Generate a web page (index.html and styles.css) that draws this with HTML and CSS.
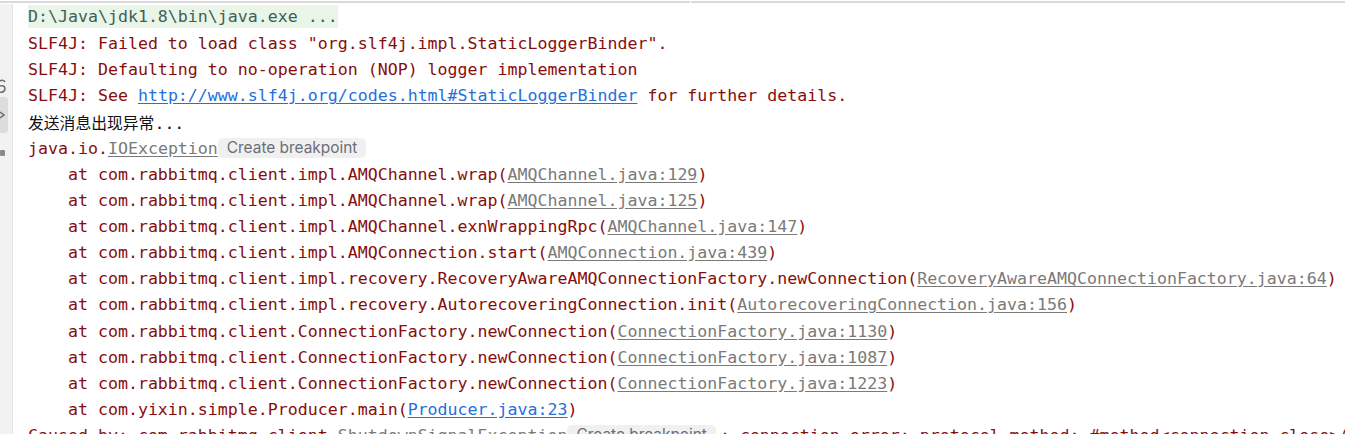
FILE: index.html
```html
<!DOCTYPE html>
<html lang="zh-CN">
<head>
<meta charset="utf-8">
<title>Console</title>
<link rel="stylesheet" href="styles.css">
</head>
<body>
<div class="topbar"><div class="seg seg-left"></div><div class="seg seg-right"></div></div>
<div class="panel">
  <aside class="gutter">
    <svg class="gicon gicon-a" width="6" height="16" viewBox="0 0 6 16"><path d="M0 3 Q3 1 5 4 M0 8 Q5 7 5 11 Q4 15 0 14" fill="none" stroke="#6e6e6e" stroke-width="1.6"/></svg>
    <div class="gbtn"><svg width="6" height="8" viewBox="0 0 6 8"><path d="M0 1 L4 4 L0 7" fill="none" stroke="#6e6e6e" stroke-width="1.5"/></svg></div>
    <svg class="gicon gicon-c" width="6" height="8" viewBox="0 0 6 8"><rect x="0" y="1" width="5" height="6" rx="1" fill="#8a8a8a"/></svg>
  </aside>
  <main class="console">
    <div class="line"><span class="cmd">D:\Java\jdk1.8\bin\java.exe ...</span></div>
    <div class="line err">SLF4J: Failed to load class "org.slf4j.impl.StaticLoggerBinder".</div>
    <div class="line err">SLF4J: Defaulting to no-operation (NOP) logger implementation</div>
    <div class="line err">SLF4J: See <a class="link" href="#">http://www.slf4j.org/codes.html#StaticLoggerBinder</a> for further details.</div>
    <div class="line out"><span class="cjk">发送消息出现异常</span>...</div>
    <div class="line err">java.io.<span class="glink">IOException</span><span class="hint">Create breakpoint</span></div>
    <div class="line err">    at com.rabbitmq.client.impl.AMQChannel.wrap(<span class="glink">AMQChannel.java:129</span>)</div>
    <div class="line err">    at com.rabbitmq.client.impl.AMQChannel.wrap(<span class="glink">AMQChannel.java:125</span>)</div>
    <div class="line err">    at com.rabbitmq.client.impl.AMQChannel.exnWrappingRpc(<span class="glink">AMQChannel.java:147</span>)</div>
    <div class="line err">    at com.rabbitmq.client.impl.AMQConnection.start(<span class="glink">AMQConnection.java:439</span>)</div>
    <div class="line err">    at com.rabbitmq.client.impl.recovery.RecoveryAwareAMQConnectionFactory.newConnection(<span class="glink">RecoveryAwareAMQConnectionFactory.java:64</span>)</div>
    <div class="line err">    at com.rabbitmq.client.impl.recovery.AutorecoveringConnection.init(<span class="glink">AutorecoveringConnection.java:156</span>)</div>
    <div class="line err">    at com.rabbitmq.client.ConnectionFactory.newConnection(<span class="glink">ConnectionFactory.java:1130</span>)</div>
    <div class="line err">    at com.rabbitmq.client.ConnectionFactory.newConnection(<span class="glink">ConnectionFactory.java:1087</span>)</div>
    <div class="line err">    at com.rabbitmq.client.ConnectionFactory.newConnection(<span class="glink">ConnectionFactory.java:1223</span>)</div>
    <div class="line err">    at com.yixin.simple.Producer.main(<a class="link" href="#">Producer.java:23</a>)</div>
    <div class="line err">Caused by: com.rabbitmq.client.<span class="glink">ShutdownSignalException</span><span class="hint">Create breakpoint</span>: connection error; protocol method: #method&lt;connection.close&gt;(reply-code=530, reply-text=NOT_ALLOWED</div>
  </main>
</div>
</body>
</html>
```

FILE: styles.css
```css
html, body {
  margin: 0;
  padding: 0;
  background: #ffffff;
  overflow: hidden;
}

body {
  width: 1345px;
  height: 434px;
}

.topbar {
  display: flex;
  gap: 1px;
  height: 3px;
  padding-top: 1px;
}

.seg {
  height: 2px;
  background: #d9d9d9;
}

.seg-left {
  width: 690px;
}

.seg-right {
  flex: 1;
}

.panel {
  display: flex;
  height: 430px;
}

.gutter {
  width: 12px;
  flex: none;
  background: #f2f2f2;
  border-right: 1px solid #e3e3e3;
  display: flex;
  flex-direction: column;
  align-items: flex-start;
}

.gicon {
  display: block;
}

.gicon-a {
  margin-top: 74px;
}

.gbtn {
  width: 8px;
  height: 36px;
  margin-top: 3px;
  background: #dcdcdc;
  border-radius: 0 4px 4px 0;
  display: flex;
  align-items: center;
}

.gicon-c {
  margin-top: 16px;
}

.console {
  flex: 1;
  padding-left: 15px;
  padding-top: 1px;
  font-family: "DejaVu Sans Mono", "Liberation Mono", monospace;
  font-size: 16.6px;
  line-height: 26.13px;
  color: #1a1a1a;
  overflow: hidden;
}

.line {
  white-space: pre;
  height: 26.13px;
}

.cmd {
  display: inline-block;
  line-height: 23px;
  height: 23px;
  margin-top: 0;
  vertical-align: top;
  background: #e9f5e6;
  color: #3f5f5a;
}

.err {
  color: #870d0d;
}

.out {
  color: #111111;
}

.cjk {
  font-family: "Noto Sans CJK SC", sans-serif;
  font-size: 15.8px;
}

.link {
  color: #2470dd;
  text-decoration: underline;
  text-underline-offset: 2px;
}

.glink {
  color: #7a7a7a;
  text-decoration: underline;
  text-underline-offset: 2px;
}

.hint {
  display: inline-block;
  font-family: Inter, "Open Sans", sans-serif;
  font-size: 15.4px;
  line-height: 20px;
  height: 20px;
  padding: 0 9px;
  margin-right: 4px;
  background: #f0f0f0;
  color: #6a6e78;
  border-radius: 5px;
  vertical-align: 1px;
}
```
